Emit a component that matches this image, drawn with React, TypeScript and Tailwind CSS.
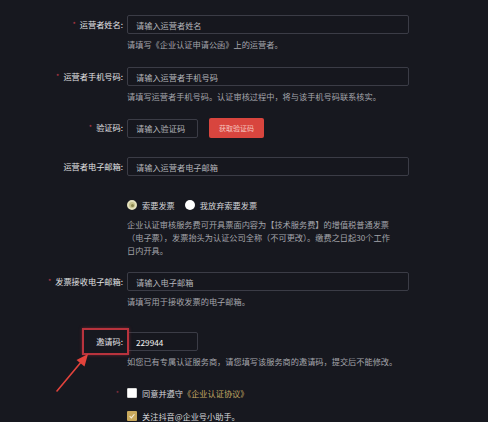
import React from 'react';

const font = "font-['Noto_Sans_CJK_SC','Noto_Sans',sans-serif]";

function Label({ text, required }: { text: string; required?: boolean }) {
  return (
    <div className="w-[127px] shrink-0 h-[19px] pr-[4px] flex items-center justify-end text-[#e2e2e4]">
      {required && <span className="text-[#c23b4a] mr-[4px] text-[7px] leading-none">*</span>}
      <span>{text}:</span>
    </div>
  );
}

function Field({
  label,
  placeholder,
  value,
  required,
  help,
  width = 'w-[282px]',
  className = '',
  children,
}: {
  label: string;
  placeholder?: string;
  value?: string;
  required?: boolean;
  help?: string;
  width?: string;
  className?: string;
  children?: React.ReactNode;
}) {
  return (
    <div className={`flex ${className}`}>
      <Label text={label} required={required} />
      <div>
        <div className="flex items-center">
          <input
            readOnly
            placeholder={placeholder}
            defaultValue={value}
            className={`${width} h-[19px] rounded-[2px] border border-[#3b3c46] bg-[#16171e] px-[8px] text-[8.2px] text-[#f2f2f2] placeholder:text-[#b4b5ba] outline-none ${font}`}
          />
          {children}
        </div>
        {help && <p className="mt-[3.5px] leading-[13px] text-[#a4a5ab]">{help}</p>}
      </div>
    </div>
  );
}

export default function App() {
  return (
    <div className={`relative h-[422px] overflow-hidden bg-[#17181f] text-[8.2px] leading-[13px] ${font}`}>
      <div className="pt-[15px]">
        <Field label="运营者姓名" required placeholder="请输入运营者姓名" help="请填写《企业认证申请公函》上的运营者。" />
        <Field
          className="mt-[16.5px]"
          label="运营者手机号码"
          required
          placeholder="请输入运营者手机号码"
          help="请填写运营者手机号码。认证审核过程中，将与该手机号码联系核实。"
        />
        <Field className="mt-[15.5px]" label="验证码" required placeholder="请输入验证码" width="w-[71px]">
          <button
            type="button"
            className="ml-[11px] h-[20px] w-[55px] rounded-[2px] bg-[#d8453e] text-[7px] text-[#f6c3bf]"
          >
            获取验证码
          </button>
        </Field>
        <Field className="mt-[19px]" label="运营者电子邮箱" placeholder="请输入运营者电子邮箱" />

        <div className="mt-[21px] flex">
          <div className="w-[127px] shrink-0" />
          <div>
            <div className="flex h-[16px] items-center text-[#d4d5d9]">
              <span className="flex h-[10px] w-[10px] items-center justify-center rounded-full border-[2px] border-[#e4e1bd] bg-[#c6c28c]">
                <span className="h-[3px] w-[3px] rounded-full bg-[#8c8850]" />
              </span>
              <span className="ml-[5px]">索要发票</span>
              <span className="ml-[10px] h-[10px] w-[10px] rounded-full bg-white" />
              <span className="ml-[5px]">我放弃索要发票</span>
            </div>
            <p className="mt-[4.5px] w-[282px] text-[#a4a5ab]">
              <span className="block whitespace-nowrap">企业认证审核服务费可开具票面内容为【技术服务费】的增值税普通发票</span>
              <span className="block whitespace-nowrap">（电子票），发票抬头为认证公司全称（不可更改）。缴费之日起30个工作</span>
              <span className="block whitespace-nowrap">日内开具。</span>
            </p>
          </div>
        </div>

        <Field
          className="mt-[15.5px]"
          label="发票接收电子邮箱"
          required
          placeholder="请输入电子邮箱"
          help="请填写用于接收发票的电子邮箱。"
        />

        <div className="relative">
          <Field
            className="mt-[24.5px]"
            label="邀请码"
            value="229944"
            width="w-[71px]"
            help="如您已有专属认证服务商，请您填写该服务商的邀请码，提交后不能修改。"
          />
          <div className="pointer-events-none absolute left-[82px] top-[-4.5px] h-[27px] w-[47px] border-[2px] border-[#b9333d] shadow-[0_0_3px_rgba(200,50,60,0.5)]" />
        </div>

        <div className="mt-[18.5px] flex h-[14px] items-center">
          <div className="w-[127px] shrink-0 pr-[8px] text-right text-[7px] text-[#9a3346]">*</div>
          <span className="h-[10px] w-[10px] rounded-[1px] border border-[#d8d8d8] bg-white" />
          <span className="ml-[5px] text-[#d4d5d9]">同意并遵守</span>
          <span className="text-[#c4a864]">《企业认证协议》</span>
        </div>

        <div className="mt-[9px] flex h-[14px] items-center">
          <div className="w-[127px] shrink-0" />
          <span className="flex h-[10px] w-[10px] items-center justify-center rounded-[1px] bg-[#c8a85c]">
            <svg viewBox="0 0 10 10" className="h-[8px] w-[8px]">
              <path d="M2 5.2 L4.2 7.3 L8 2.8" fill="none" stroke="#f4ecd8" strokeWidth="1.4" />
            </svg>
          </span>
          <span className="ml-[5px] text-[#d4d5d9]">关注抖音@企业号小助手。</span>
        </div>
      </div>

      <svg className="pointer-events-none absolute inset-0 h-full w-full" viewBox="0 0 488 422">
        <line x1="57" y1="391" x2="82" y2="361" stroke="#e2433c" strokeWidth="1.6" strokeLinecap="round" />
        <polygon points="88,354 84.5,366.5 76.5,360" fill="#e2433c" />
      </svg>
    </div>
  );
}
